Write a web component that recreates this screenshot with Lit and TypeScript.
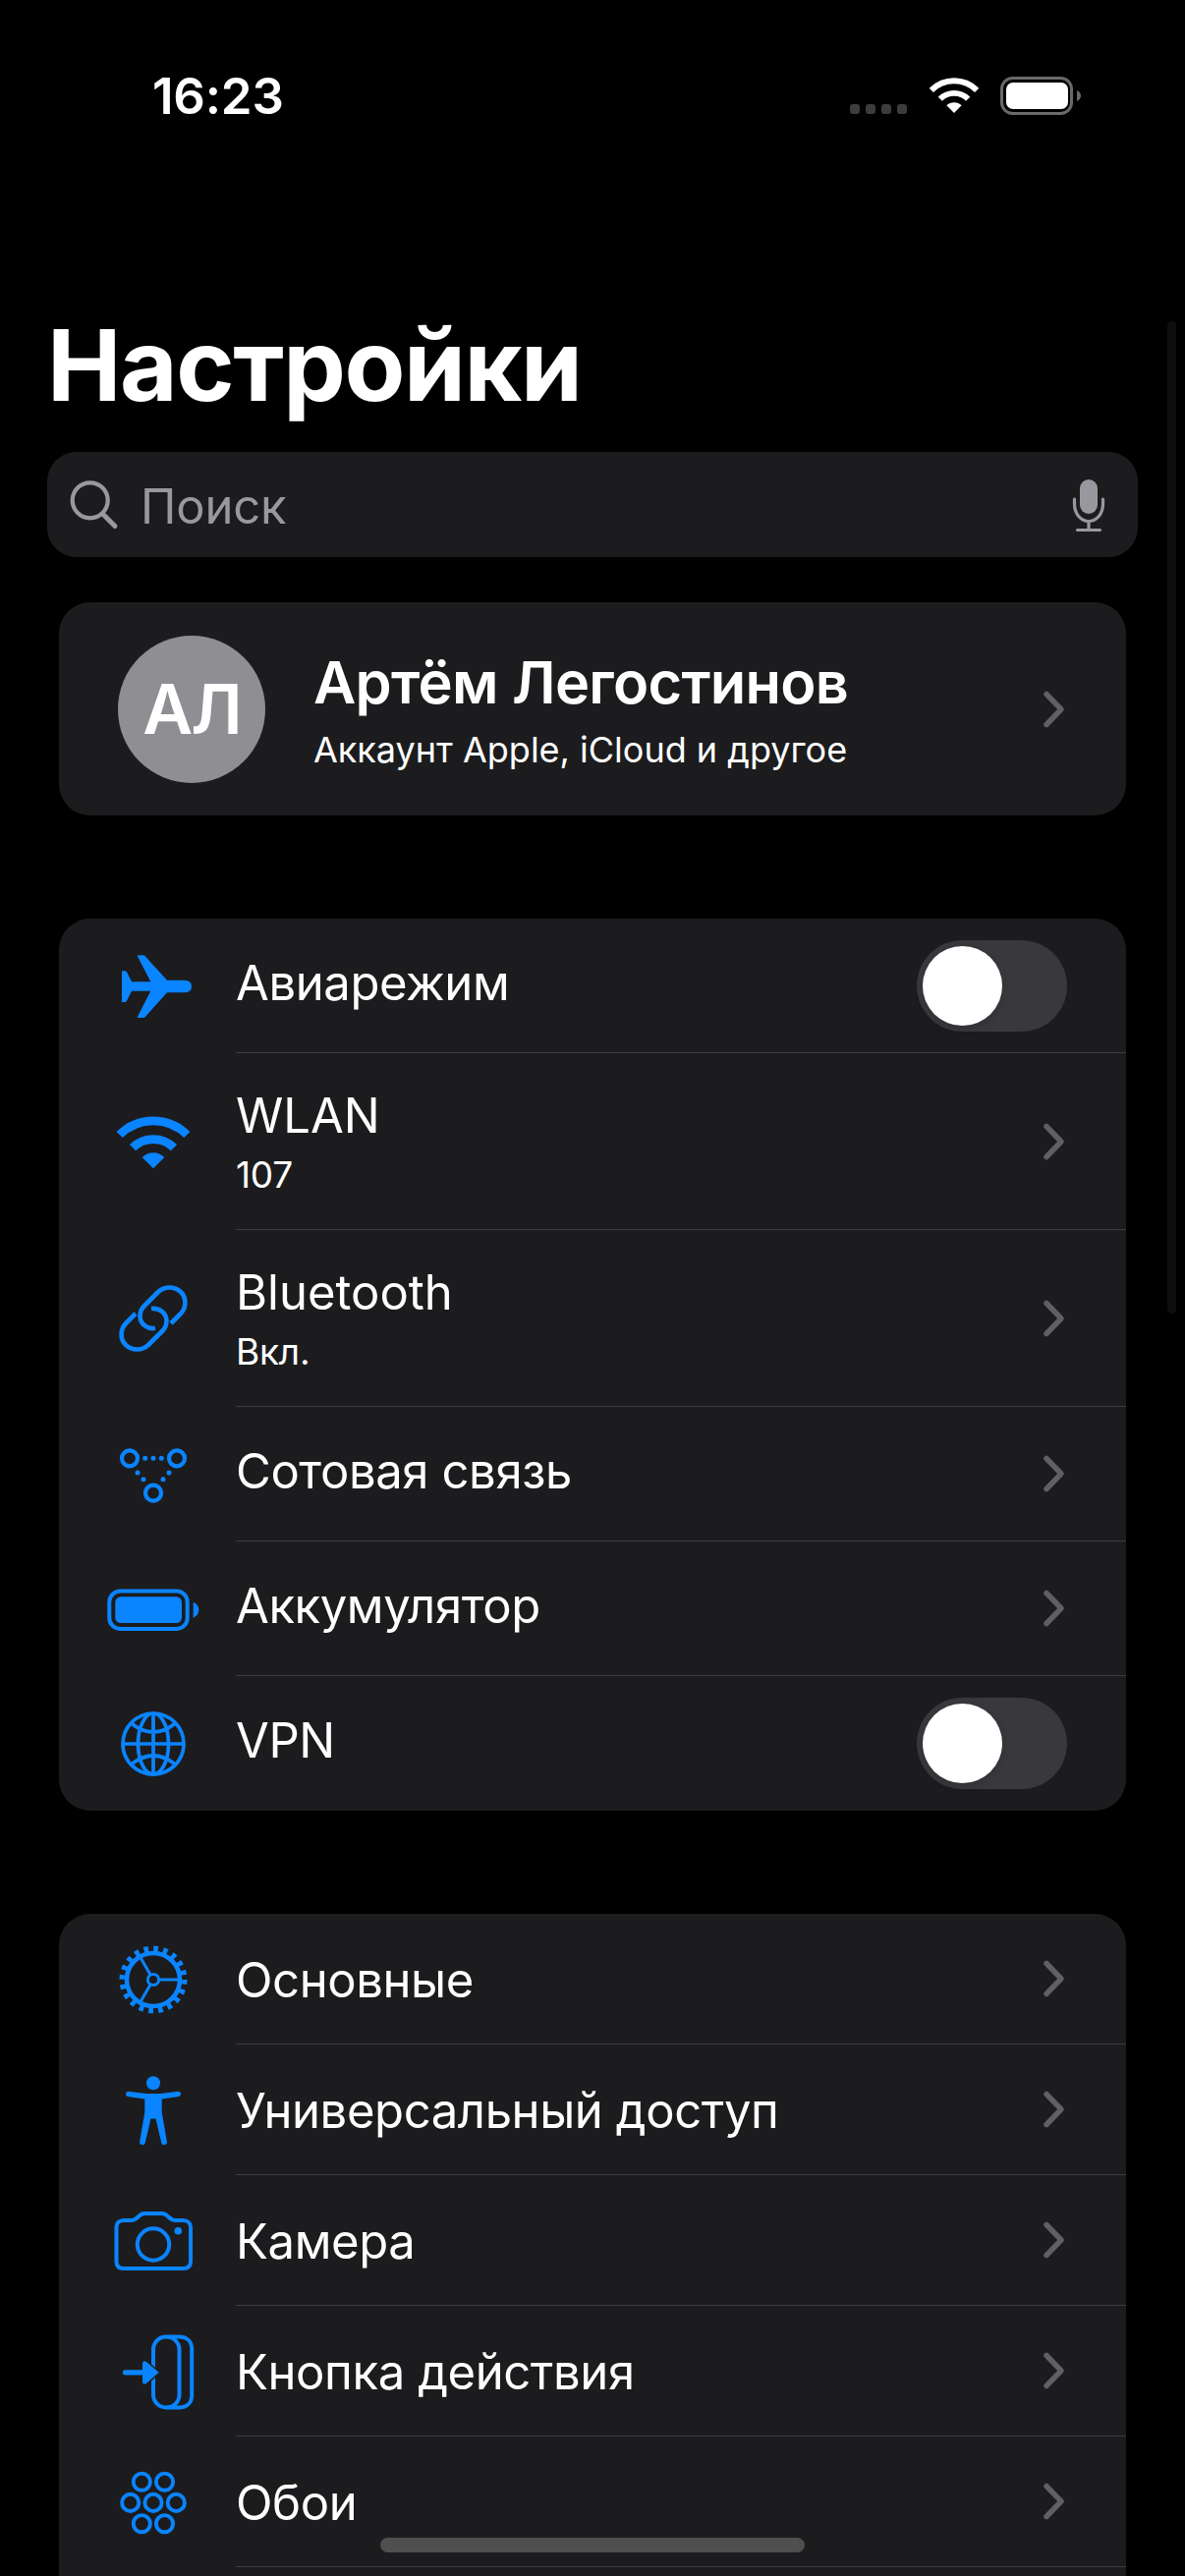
import { LitElement, html, css, svg } from "lit";
import { customElement } from "lit/decorators.js";

const wifiPaths = svg`
  <path d="M15.7 43 A48.5 48.5 0 0 1 84.3 43" fill="none" stroke="currentColor" stroke-width="8.8"/>
  <path d="M29 56.2 A29.8 29.8 0 0 1 71 56.2" fill="none" stroke="currentColor" stroke-width="8.8"/>
  <path d="M50 77.3 L38.7 66 A16 16 0 0 1 61.3 66 Z" fill="currentColor"/>`;

const linkPath = "M68 55 L77.5 45.5 C84 39 84 29 78 23 C71.5 17 61.5 17 55 23 L41 37 C35 43 35 52 41 57 C44 59.5 48 60.5 52 60";

const icons: Record<string, unknown> = {
  plane: svg`<path fill="currentColor" d="M18 34.3 h3.2 q1.3 0 2.1 1.5 L28 45.3 H47.3 L34 19.5 q-.5-1.2 1-1.2 H39.5 q1.5 0 2.5 1.2 L64 43.7 H81 Q89 43.7 89 50 Q89 56.3 81 56.3 H64 L42 80.8 q-1 1.2 -2.5 1.2 H35 q-1.5 0 -1-1.2 L47.3 54.7 H28 L23.3 64.2 q-.8 1.8 -2.1 1.8 H18 Z"/>`,
  wifi: wifiPaths,
  link: svg`<g fill="none" stroke="currentColor" stroke-width="4.6" stroke-linecap="butt">
    <path d=${linkPath}/><path d=${linkPath} transform="rotate(180 50 50)"/></g>`,
  cellular: svg`<g fill="none" stroke="currentColor" stroke-width="4.2">
      <circle cx="26" cy="33.3" r="8"/><circle cx="74" cy="33.3" r="8"/><circle cx="50" cy="68.7" r="8"/></g>
    <g fill="currentColor">
      <circle cx="41.7" cy="33.3" r="2.5"/><circle cx="50" cy="33.3" r="2.5"/><circle cx="58.3" cy="33.3" r="2.5"/>
      <circle cx="34" cy="48" r="2.5"/><circle cx="40" cy="54.7" r="2.5"/><circle cx="66" cy="48" r="2.5"/><circle cx="60" cy="54.7" r="2.5"/></g>`,
  battery: svg`<rect x="5.3" y="31.5" width="79.4" height="38.4" rx="11" fill="none" stroke="currentColor" stroke-width="4"/>
    <rect x="11.3" y="37.3" width="67.7" height="26.7" rx="5.5" fill="currentColor"/>
    <path fill="currentColor" d="M90.7 43 C94 44 96.3 47 96.3 50.8 C96.3 54.6 94 57 90.7 58.7Z"/>`,
  globe: svg`<g fill="none" stroke="currentColor" stroke-width="3.7">
    <circle cx="50" cy="50" r="31"/><ellipse cx="50" cy="50" rx="15.5" ry="31"/>
    <path d="M50 19 V81 M19 50 H81 M27.5 29 Q50 47 72.5 29 M27.5 71 Q50 53 72.5 71"/></g>`,
  gear: svg`<g fill="none" stroke="currentColor">
    <circle cx="50" cy="50" r="31" stroke-width="7" stroke-dasharray="4.6 5.14"/>
    <circle cx="50" cy="50" r="27" stroke-width="4.6"/>
    <circle cx="50" cy="50" r="5.6" stroke-width="3"/>
    <path stroke-width="3" d="M55.6 50 H78 M47.2 45.2 L36 25.8 M47.2 54.8 L36 74.2"/></g>`,
  person: svg`<circle cx="50" cy="22.3" r="7" fill="currentColor"/>
    <path fill="currentColor" d="M24.5 30.7 L43 33 H57 L75.5 30.7 a2.7 2.7 0 0 1 .6 5.3 L58.7 38.5 V52 L63.8 81.5 a2.9 2.9 0 0 1 -5.5 1.8 L52.5 58.5 H47.5 L41.7 83.3 a2.9 2.9 0 0 1 -5.5 -1.8 L41.3 52 V38.5 L24 36 a2.7 2.7 0 0 1 .5 -5.3 Z"/>`,
  camera: svg`<path fill="none" stroke="currentColor" stroke-width="4" d="M20 29 H28 C31 29 32 28 34 26 C36 24 37.5 22 41 22 H59 C62.5 22 64 24 66 26 C68 28 69 29 72 29 H80 C85 29 88 32 88 36 V71 C88 76 85 78 80 78 H20 C15 78 12.5 76 12.5 71 V36 C12.5 32 15 29 20 29Z"/>
    <circle cx="50" cy="53.5" r="16.2" fill="none" stroke="currentColor" stroke-width="4"/>
    <circle cx="75.3" cy="39.7" r="3.8" fill="currentColor"/>`,
  action: svg`<g fill="none" stroke="currentColor" stroke-width="4">
      <rect x="50" y="14.5" width="26.5" height="72" rx="13"/>
      <path d="M64 14.5 H76 C85 14.5 89.2 20 89.2 27 V74 C89.2 81 85 86.5 76 86.5 H64"/></g>
    <path d="M39 42 q0 -4 4 -2 L55.7 50.8 L43 62 q-4 2 -4 -2 Z" fill="currentColor" stroke="#1c1c1e" stroke-width="3" paint-order="stroke"/>
    <path d="M21.5 50.8 H42" stroke="currentColor" stroke-width="5.2" stroke-linecap="round"/>`,
  wallpaper: svg`<g fill="none" stroke="currentColor" stroke-width="3.9">
    <circle cx="38.3" cy="29.2" r="8.6"/><circle cx="61.5" cy="29.2" r="8.6"/>
    <circle cx="26.7" cy="50.4" r="8.6"/><circle cx="50" cy="50.4" r="8.6"/><circle cx="73.3" cy="50.4" r="8.6"/>
    <circle cx="38.3" cy="71.7" r="8.6"/><circle cx="61.5" cy="71.7" r="8.6"/></g>`,
};

interface Row { icon: string; title: string; sub?: string; toggle?: boolean }

const network: Row[] = [
  { icon: "plane", title: "Авиарежим", toggle: true },
  { icon: "wifi", title: "WLAN", sub: "107" },
  { icon: "link", title: "Bluetooth", sub: "Вкл." },
  { icon: "cellular", title: "Сотовая связь" },
  { icon: "battery", title: "Аккумулятор" },
  { icon: "globe", title: "VPN", toggle: true },
];

const general: Row[] = [
  { icon: "gear", title: "Основные" },
  { icon: "person", title: "Универсальный доступ" },
  { icon: "camera", title: "Камера" },
  { icon: "action", title: "Кнопка действия" },
  { icon: "wallpaper", title: "Обои" },
  { icon: "", title: "" },
];

const chevron = html`<svg class="chevron" viewBox="0 0 30 40"><path d="M7 4.5 L22 20 L7 35.5"/></svg>`;

@customElement("app-root")
export class AppRoot extends LitElement {
  static styles = css`
    :host {
      display: block;
      position: relative;
      height: 2622px;
      overflow: hidden;
      background: #000;
      color: #fff;
      font-family: Inter, "Noto Sans", sans-serif;
    }
    .status {
      height: 150px;
      display: flex;
      align-items: flex-start;
      justify-content: space-between;
      padding: 0 106px 0 155px;
      box-sizing: border-box;
    }
    .time {
      margin-top: 68px;
      font-size: 51px;
      line-height: 60px;
      font-weight: 600;
      letter-spacing: -0.2px;
    }
    .status-icons { display: flex; margin-top: 78px; }
    .dots { display: flex; gap: 6px; margin: 28px 23px 0 0; }
    .dots i { width: 10px; height: 10px; border-radius: 3px; background: #3c3c3c; }
    .status-wifi { width: 50px; height: 36px; margin: 1px 22px 0 0; color: #fff; }
    .status-battery { width: 82px; height: 39px; }
    h1 {
      margin: 161px 0 29px 48px;
      font-size: 101px;
      line-height: 120px;
      font-weight: 700;
      letter-spacing: -1.4px;
    }
    .search {
      margin: 0 48px;
      height: 107px;
      border-radius: 30px;
      background: #1c1c1e;
      display: flex;
      align-items: center;
      padding: 0 28px 0 22px;
      color: #98989f;
      font-size: 49px;
    }
    .search .glass { width: 52px; height: 52px; margin-right: 21px; }
    .search span { flex: 1; padding-top: 4px; letter-spacing: -0.2px; }
    .search .mic { width: 44px; height: 56px; margin-right: 0; }
    .card {
      margin: 0 60px;
      border-radius: 32px;
      background: #1c1c1e;
      overflow: hidden;
    }
    .profile {
      margin-top: 46px;
      height: 217px;
      display: flex;
      align-items: center;
      padding: 0 58px 0 60px;
    }
    .avatar {
      width: 150px;
      height: 150px;
      border-radius: 50%;
      background: #8e8e93;
      display: flex;
      align-items: center;
      justify-content: center;
      font-size: 70px;
      font-weight: 600;
      letter-spacing: -2px;
    }
    .who { flex: 1; margin-left: 49px; }
    .name { font-size: 59.5px; line-height: 66px; font-weight: 600; letter-spacing: -0.7px; margin-top: 3px; }
    .more { font-size: 36px; line-height: 46px; margin-top: 13px; }
    .chevron { width: 30px; height: 40px; flex: none; }
    .chevron path {
      fill: none;
      stroke: #5f5f64;
      stroke-width: 5.5;
      stroke-linecap: round;
      stroke-linejoin: round;
    }
    .group { margin-top: 105px; }
    .row { display: flex; height: 137px; }
    .row.tall { height: 180px; }
    .general .row { height: 133px; }
    .slot { width: 180px; flex: none; display: flex; align-items: center; padding-left: 46px; box-sizing: border-box; }
    .icon { width: 100px; height: 100px; color: #0a84ff; display: block; }
    .body {
      flex: 1;
      display: flex;
      align-items: center;
      padding-right: 58px;
      border-bottom: 1px solid #3c3c3f;
    }
    .row:last-child .body { border-bottom: none; }
    .text { flex: 1; padding-bottom: 5px; }
    .tall .text, .general .text { padding-bottom: 0; padding-top: 3px; }
    .title { font-size: 49px; line-height: 60px; letter-spacing: -0.4px; }
    .tall .title { letter-spacing: 0; }
    .sub { font-size: 37px; line-height: 48px; margin-top: 6px; letter-spacing: -0.2px; }
    .toggle {
      position: relative;
      width: 153px;
      height: 93px;
      margin-right: 2px;
      border-radius: 47px;
      background: #39393d;
    }
    .knob {
      position: absolute;
      left: 6px;
      top: 6px;
      width: 81px;
      height: 81px;
      border-radius: 50%;
      background: #fff;
      box-shadow: 0 3px 9px rgba(0, 0, 0, 0.15);
    }
    .scrollbar {
      position: absolute;
      left: 1188px;
      top: 327px;
      width: 9px;
      height: 1010px;
      border-radius: 5px;
      background: #0e0e0e;
    }
    .home {
      position: absolute;
      left: 387px;
      top: 2583px;
      width: 432px;
      height: 15px;
      border-radius: 8px;
      background: #4f4f4f;
    }
  `;

  private renderRow(r: Row) {
    return html`
      <div class="row ${r.sub ? "tall" : ""}">
        <div class="slot">
          ${r.icon ? html`<svg class="icon" viewBox="0 0 100 100">${icons[r.icon]}</svg>` : ""}
        </div>
        <div class="body">
          <div class="text">
            <div class="title">${r.title}</div>
            ${r.sub ? html`<div class="sub">${r.sub}</div>` : ""}
          </div>
          ${r.toggle
            ? html`<div class="toggle"><div class="knob"></div></div>`
            : r.title ? chevron : ""}
        </div>
      </div>
    `;
  }

  render() {
    return html`
      <div class="status">
        <div class="time">16:23</div>
        <div class="status-icons">
          <div class="dots"><i></i><i></i><i></i><i></i></div>
          <svg class="status-wifi" viewBox="13 24 74 53.3">${wifiPaths}</svg>
          <svg class="status-battery" viewBox="0 0 82 39">
            <rect x="1.5" y="1.5" width="71" height="36" rx="11" fill="none" stroke="#6a6a6a" stroke-width="3"/>
            <rect x="6" y="6" width="63" height="27" rx="7" fill="#fff"/>
            <path d="M78 14 C80.5 15 82 17 82 19.5 C82 22 80.5 24 78 25Z" fill="#6a6a6a"/>
          </svg>
        </div>
      </div>
      <h1>Настройки</h1>
      <div class="search">
        <svg class="glass" viewBox="0 0 52 52" fill="none" stroke="currentColor">
          <circle cx="21.7" cy="21.3" r="18" stroke-width="4.2"/>
          <path d="M35 35.5 L47 47.5" stroke-width="5" stroke-linecap="round"/>
        </svg>
        <span>Поиск</span>
        <svg class="mic" viewBox="0 0 44 56">
          <rect x="13" y="2" width="18" height="35" rx="9" fill="currentColor"/>
          <path d="M7.5 22 V27 C7.5 37 14 44.5 22 44.5 C30 44.5 36.5 37 36.5 27 V22 M22 44.5 V53 M10.5 53.5 H33.5" fill="none" stroke="currentColor" stroke-width="3.2" stroke-linecap="round"/>
        </svg>
      </div>
      <div class="card profile">
        <div class="avatar">АЛ</div>
        <div class="who">
          <div class="name">Артём Легостинов</div>
          <div class="more">Аккаунт Apple, iCloud и другое</div>
        </div>
        ${chevron}
      </div>
      <div class="card group">${network.map((r) => this.renderRow(r))}</div>
      <div class="card group general">${general.map((r) => this.renderRow(r))}</div>
      <div class="scrollbar"></div>
      <div class="home"></div>
    `;
  }
}
